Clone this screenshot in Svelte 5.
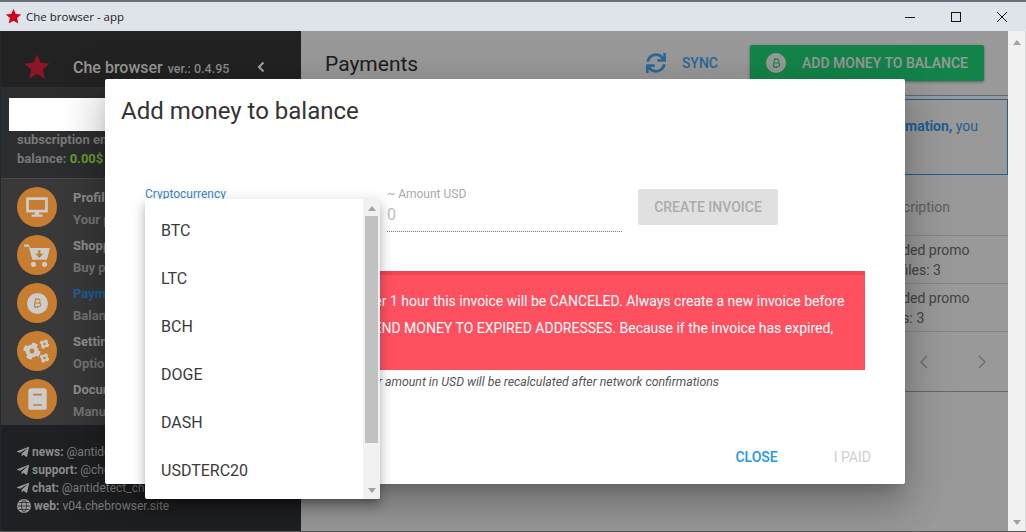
<script>
  const starPoints = '12,1 15.1,8.3 23,9 17,14.2 18.8,22 12,17.9 5.2,22 7,14.2 1,9 8.9,8.3';
  const plane = 'M446.7 98.6l-67.6 318.8c-5.1 22.5-18.4 28.1-37.3 17.5l-103-75.9-49.7 47.8c-5.5 5.5-10.1 10.1-20.7 10.1l7.4-104.9 190.9-172.5c8.3-7.4-1.8-11.5-12.9-4.1L117.8 284 16.2 252.2c-22.1-6.9-22.5-22.1 4.6-32.7L418.2 66.4c18.4-6.9 34.5 4.1 28.5 32.2z';
  const sync = 'M440.65 12.57l4 82.77A247.16 247.16 0 0 0 255.83 8C134.73 8 33.91 94.92 12.29 209.82A12 12 0 0 0 24.09 224h49.05a12 12 0 0 0 11.67-9.26 175.91 175.91 0 0 1 317-56.94l-101.46-4.86a12 12 0 0 0-12.57 12v47.41a12 12 0 0 0 12 12H500a12 12 0 0 0 12-12V12a12 12 0 0 0-12-12h-47.37a12 12 0 0 0-11.98 12.57zM255.83 432a175.61 175.61 0 0 1-146-77.8l101.8 4.87a12 12 0 0 0 12.57-12v-47.4a12 12 0 0 0-12-12H12a12 12 0 0 0-12 12V500a12 12 0 0 0 12 12h47.35a12 12 0 0 0 12-12.6l-4.15-82.57A247.17 247.17 0 0 0 255.83 504c121.11 0 221.93-86.92 243.55-201.82a12 12 0 0 0-11.8-14.18h-49.05a12 12 0 0 0-11.67 9.26A175.86 175.86 0 0 1 255.83 432z';

  const menu = [
    { icon: 'monitor', title: 'Profiles', sub: 'Your profiles' },
    { icon: 'cart', title: 'Shopping', sub: 'Buy profiles' },
    { icon: 'coin', title: 'Payments', sub: 'Balance', active: true },
    { icon: 'gears', title: 'Settings', sub: 'Options' },
    { icon: 'book', title: 'Documentation', sub: 'Manual' }
  ];

  const links = [
    { label: 'news:', value: '@antidetect_news' },
    { label: 'support:', value: '@chebrowser' },
    { label: 'chat:', value: '@antidetect_chat' },
    { label: 'web:', value: 'v04.chebrowser.site', web: true }
  ];

  const rows = [
    ['Loaded promo', 'Profiles: 3'],
    ['Loaded promo', 'Days: 3']
  ];

  const coins = ['BTC', 'LTC', 'BCH', 'DOGE', 'DASH', 'USDTERC20'];
</script>

{#snippet bitcoin(color)}
  <svg viewBox="0 0 24 24" width="24" height="24" fill="none" stroke={color} stroke-width="1.6">
    <path d="M9 6.5h5a2.7 2.7 0 0 1 0 5.4H8.6M8.6 11.9h6a2.9 2.9 0 0 1 0 5.8H7.6M9.7 6.5 8 17.7M11 4.5l-.3 2M14 4.5l-.3 2M10 17.7l-.3 2M13 17.7l-.3 2" />
  </svg>
{/snippet}

{#snippet gear(cx, cy, r)}
  <circle {cx} {cy} {r} fill="#ccc" />
  <circle {cx} {cy} r={r * 1.1} fill="none" stroke="#ccc" stroke-width={r * 0.45} stroke-dasharray={r * 0.86} />
  <circle {cx} {cy} r={r * 0.38} fill="#c77d2f" />
{/snippet}

<div class="window">
  <div class="titlebar">
    <svg class="app-star" viewBox="0 0 24 24" width="17" height="17"><polygon points={starPoints} fill="#d0021b" /></svg>
    <span class="app-title">Che browser - app</span>
    <div class="controls">
      <svg viewBox="0 0 46 30" width="46" height="30"><path d="M18 15.5h10" stroke="#111" /></svg>
      <svg viewBox="0 0 46 30" width="46" height="30"><rect x="18.5" y="10.5" width="9" height="9" fill="none" stroke="#111" /></svg>
      <svg viewBox="0 0 46 30" width="46" height="30"><path d="M18 10l10 10M28 10L18 20" stroke="#111" /></svg>
    </div>
  </div>

  <div class="body">
    <aside class="sidebar">
      <div class="brand">
        <svg viewBox="0 0 24 24" width="28" height="28"><polygon points={starPoints} fill="#8c1526" /></svg>
        <span class="brand-name">Che browser</span>
        <span class="brand-ver">ver.: 0.4.95</span>
        <svg class="collapse" viewBox="0 0 12 14" width="12" height="14"><path d="M8.5 2.500 4 7l4.500 4.500" fill="none" stroke="#a0a0a0" stroke-width="2.200" /></svg>
      </div>

      <div class="account">
        <div>subscription ends: 2021-10-12</div>
        <div>balance: <span class="money">0.00$</span></div>
      </div>

      <nav class="menu">
        {#each menu as item}
          <div class="menu-item">
            <span class="circle">
              {#if item.icon === 'monitor'}
                <svg viewBox="0 0 24 24" width="26" height="26" fill="#ccc"><path d="M2 3h20v14H14v2h3v2H7v-2h3v-2H2zM4.500 5.500v9h15v-9z" fill-rule="evenodd" /></svg>
              {:else if item.icon === 'cart'}
                <svg viewBox="0 0 24 24" width="28" height="28" fill="#ccc"><path d="M1 3h4l1 3h17l-2.500 10H8L5 5H1z" /><circle cx="9" cy="20" r="2.200" /><circle cx="18.500" cy="20" r="2.200" /><path d="M13 8v3h-2.500l3.500 3.500 3.500-3.500H15V8z" fill="#c77d2f" /></svg>
              {:else if item.icon === 'coin'}
                <span class="coin-disc">{@render bitcoin('#c77d2f')}</span>
              {:else if item.icon === 'gears'}
                <svg viewBox="0 0 32 32" width="32" height="32">
                  {@render gear(11, 16, 6.500)}
                  {@render gear(23.500, 9, 3.600)}
                  {@render gear(23.500, 23, 3.600)}
                </svg>
              {:else}
                <svg viewBox="0 0 24 24" width="26" height="26"><rect x="4" y="2" width="17" height="20" rx="2.500" fill="#ccc" /><path d="M8.500 8h8M8.500 17.500h8" stroke="#c77d2f" stroke-width="1.500" /></svg>
              {/if}
            </span>
            <div class="menu-text">
              <div class="menu-title" class:active={item.active}>{item.title}</div>
              <div class="menu-sub">{item.sub}</div>
            </div>
          </div>
        {/each}
      </nav>

      <div class="links">
        {#each links as link}
          <div class="link">
            {#if link.web}
              <svg viewBox="0 0 24 24" width="14" height="14" fill="none" stroke="#999" stroke-width="2"><circle cx="12" cy="12" r="11" fill="#999" /><path d="M1 12h22M3 6h18M3 18h18M12 1c-6 6-6 16 0 22M12 1c6 6 6 16 0 22" stroke="#222" stroke-width="1.300" /></svg>
            {:else}
              <svg viewBox="0 0 448 512" width="12" height="14"><path d={plane} fill="#999" /></svg>
            {/if}
            <b>{link.label}</b> <span>{link.value}</span>
          </div>
        {/each}
      </div>
    </aside>

    <main class="main">
      <header class="page-head">
        <h1>Payments</h1>
        <div class="sync">
          <svg viewBox="0 0 512 512" width="20" height="20"><path d={sync} fill="#46b0ff" /></svg>
          <span>SYNC</span>
        </div>
        <div class="add-btn">
          <span class="add-icon">{@render bitcoin('#20dc7b')}</span>
          <span>ADD MONEY TO BALANCE</span>
        </div>
      </header>

      <div class="info">
        <span>To get more <b>information,</b> you</span>
      </div>

      <div class="table">
        <div class="cell head">Description</div>
        {#each rows as row}
          <div class="cell">{row[0]}<br />{row[1]}</div>
        {/each}
        <div class="pager">
          <svg viewBox="0 0 12 16" width="12" height="16"><path d="M9 2 3 8l6 6" fill="none" stroke="#bbb" stroke-width="1.500" /></svg>
          <svg viewBox="0 0 12 16" width="12" height="16"><path d="m3 2 6 6-6 6" fill="none" stroke="#bbb" stroke-width="1.500" /></svg>
        </div>
      </div>

      <div class="scrim"></div>
    </main>

    <div class="page-scroll">
      <span class="arrow up"></span>
      <span class="arrow down"></span>
    </div>
  </div>

  <div class="redacted"></div>

  <section class="dialog">
    <h2>Add money to balance</h2>

    <div class="form">
      <div class="field coin-field">
        <label for="coin">Cryptocurrency</label>
      </div>
      <div class="field amount-field">
        <label for="amount">~ Amount USD</label>
        <div id="amount" class="amount">0</div>
      </div>
      <div class="create">CREATE INVOICE</div>
    </div>

    <div class="alert">
      Please, read this very carefully! After 1 hour this invoice will be CANCELED. Always create a new invoice before<br />
      making a new payment. DO NOT SEND MONEY TO EXPIRED ADDRESSES. Because if the invoice has expired,<br />
      your money can be lost.
    </div>
    <p class="note">Your amount in USD will be recalculated after network confirmations</p>

    <div class="actions">
      <span class="close">CLOSE</span>
      <span class="paid">I PAID</span>
    </div>

    <div class="dropdown">
      <ul>
        {#each coins as coin}
          <li>{coin}</li>
        {/each}
      </ul>
      <div class="list-scroll">
        <span class="arrow up"></span>
        <div class="thumb"></div>
        <span class="arrow down"></span>
      </div>
    </div>
  </section>
</div>

<style>
  :global(body) {
    margin: 0;
    overflow: hidden;
  }

  .window {
    position: relative;
    width: 1026px;
    height: 532px;
    display: flex;
    flex-direction: column;
    overflow: hidden;
    box-sizing: border-box;
    border-bottom: 1px solid #555;
    font-family: Roboto, "Liberation Sans", sans-serif;
  }

  .titlebar {
    height: 29px;
    flex: none;
    display: flex;
    align-items: center;
    padding-left: 5px;
    background: #dfe3ea;
    border-top: 2px solid #68717c;
  }
  .app-title {
    margin-left: 4px;
    font: 11.5px "Open Sans", sans-serif;
    color: #222;
  }
  .controls {
    margin-left: auto;
    margin-right: 1px;
    display: flex;
  }

  .body {
    flex: 1;
    min-height: 0;
    display: flex;
  }

  .sidebar {
    width: 301px;
    flex: none;
    display: flex;
    flex-direction: column;
    background: #1f2023;
    color: #808080;
    font-size: 13px;
    font-weight: 700;
    border-left: 1px solid #1c2a38;
    box-sizing: border-box;
  }
  .brand {
    height: 56px;
    flex: none;
    box-sizing: border-box;
    display: flex;
    align-items: center;
    padding: 16px 0 0 22px;
    background: #222;
  }
  .brand-name {
    margin-left: 22px;
    font-size: 16px;
    font-weight: 500;
    color: #979797;
  }
  .brand-ver {
    margin-left: 5px;
    font-size: 12.500px;
    font-weight: 500;
    color: #8c8c8c;
    padding-top: 2px;
  }
  .collapse {
    margin-left: 26px;
  }
  .account {
    height: 92px;
    flex: none;
    box-sizing: border-box;
    padding: 43px 16px 0;
    background: #2c2d2f;
    border-bottom: 1px solid #4a4a4a;
    line-height: 19px;
    color: #787878;
  }
  .money {
    color: #6b9a2c;
  }
  .menu {
    height: 246px;
    flex: none;
    box-sizing: border-box;
    padding: 8px 16px 0;
    background: #393939;
  }
  .menu-item {
    height: 48px;
    display: flex;
    gap: 16px;
  }
  .circle {
    width: 40px;
    height: 40px;
    border-radius: 50%;
    flex: none;
    display: flex;
    align-items: center;
    justify-content: center;
    background: #c77d2f;
  }
  .coin-disc {
    width: 21px;
    height: 21px;
    border-radius: 50%;
    display: flex;
    align-items: center;
    justify-content: center;
    background: #ccc;
  }
  .coin-disc :global(svg) {
    width: 16px;
    height: 16px;
  }
  .menu-text {
    line-height: 22px;
  }
  .menu-title {
    color: #8f8f8f;
  }
  .menu-title.active {
    color: #1c5f96;
  }
  .menu-sub {
    color: #757575;
  }
  .links {
    padding: 18px 16px 0;
    line-height: 18px;
    font-size: 12px;
    font-weight: 400;
  }
  .link {
    display: flex;
    align-items: center;
    gap: 3px;
    white-space: nowrap;
  }
  .link b {
    font-weight: 700;
    color: #8c8c8c;
  }

  .main {
    position: relative;
    flex: 1;
    min-width: 0;
    display: flex;
    flex-direction: column;
    background: #fff;
    overflow: hidden;
  }
  .scrim {
    position: absolute;
    inset: 0;
    background: rgba(0, 0, 0, 0.4);
  }
  .page-head {
    height: 65px;
    flex: none;
    box-sizing: border-box;
    display: flex;
    align-items: center;
    padding: 0 24px;
    border-bottom: 1px solid #aaa;
  }
  .page-head h1 {
    margin: 0 auto 0 0;
    padding-top: 2px;
    font-size: 21px;
    font-weight: 400;
    color: #333;
  }
  .sync {
    display: flex;
    align-items: center;
    gap: 16px;
    font-size: 14px;
    font-weight: 500;
    color: #46b0ff;
    margin-right: 32px;
  }
  .add-btn {
    width: 234px;
    height: 36px;
    box-sizing: border-box;
    display: flex;
    align-items: center;
    gap: 16px;
    padding-left: 16px;
    border-radius: 2px;
    background: #20dc7b;
    font-size: 14px;
    font-weight: 500;
    color: #fff;
    white-space: nowrap;
    box-shadow: 0 1px 3px rgba(0, 0, 0, 0.4);
  }
  .add-icon {
    width: 20px;
    height: 20px;
    border-radius: 50%;
    display: flex;
    align-items: center;
    justify-content: center;
    background: #fff;
  }
  .add-icon :global(svg) {
    width: 16px;
    height: 16px;
  }
  .info {
    height: 76px;
    flex: none;
    margin-top: 3px;
    box-sizing: border-box;
    display: flex;
    justify-content: flex-end;
    padding: 16px 29px 0 0;
    border: 1px solid #3aa0ee;
    color: #3aa0ee;
    font-size: 14px;
    line-height: 20px;
  }
  .info b {
    font-weight: 700;
  }
  .table {
    flex: none;
    display: flex;
    flex-direction: column;
    font-size: 14px;
    color: #707070;
  }
  .cell {
    height: 48px;
    padding: 4px 0 0 578px;
    box-sizing: border-box;
    border-bottom: 1px solid #e0e0e0;
    line-height: 20px;
    white-space: nowrap;
  }
  .cell.head {
    height: 61px;
    padding-top: 22px;
    color: #9e9e9e;
  }
  .pager {
    height: 60px;
    display: flex;
    align-items: center;
    justify-content: flex-end;
    gap: 46px;
    padding-right: 20px;
    border-bottom: 1px solid #aaa;
    box-sizing: border-box;
  }

  .page-scroll {
    width: 18px;
    flex: none;
    box-sizing: border-box;
    border-right: 1px solid #d8d8d8;
    background: #f1f1f1;
    display: flex;
    flex-direction: column;
    justify-content: space-between;
    align-items: center;
    padding: 9px 0 6px;
  }
  .arrow {
    width: 0;
    height: 0;
    border-left: 4px solid transparent;
    border-right: 4px solid transparent;
  }
  .arrow.up {
    border-bottom: 5px solid #a3a3a3;
  }
  .arrow.down {
    border-top: 5px solid #a3a3a3;
  }

  .redacted {
    position: absolute;
    left: 9px;
    top: 98px;
    width: 110px;
    height: 33px;
    background: #fff;
  }

  .dialog {
    position: absolute;
    left: 105px;
    top: 79px;
    width: 800px;
    height: 405px;
    box-sizing: border-box;
    display: flex;
    flex-direction: column;
    padding: 16px 0 0 40px;
    border-radius: 2px;
    background: #fff;
    color: #333;
    box-shadow: 0 11px 15px -7px rgba(0, 0, 0, 0.2), 0 24px 38px 3px rgba(0, 0, 0, 0.14), 0 9px 46px 8px rgba(0, 0, 0, 0.12);
  }
  .dialog h2 {
    margin: 0 0 0 -24px;
    font-size: 24px;
    font-weight: 400;
    line-height: 32px;
    color: #333;
  }
  .form {
    margin-top: 59px;
    height: 82px;
    flex: none;
    display: flex;
    align-items: flex-start;
  }
  .field label {
    display: block;
    font-size: 12px;
    line-height: 14px;
  }
  .coin-field {
    width: 242px;
    padding-top: 1px;
  }
  .coin-field label {
    color: #3a85c8;
  }
  .amount-field {
    width: 235px;
    padding-top: 1px;
  }
  .amount-field label {
    color: #aaa;
  }
  .amount {
    height: 20px;
    padding: 4px 0 6px;
    font-size: 16px;
    line-height: 20px;
    color: #c0c0c0;
    border-bottom: 1px dotted #777;
  }
  .create {
    width: 140px;
    height: 36px;
    margin: 3px 0 0 16px;
    border-radius: 2px;
    background: #e0e0e0;
    color: #ababab;
    font-size: 14px;
    font-weight: 500;
    line-height: 36px;
    text-align: center;
  }
  .alert {
    width: 720px;
    height: 99px;
    flex: none;
    margin-top: 3px;
    box-sizing: border-box;
    padding: 13px 0 0 16px;
    background: #ff5060;
    border-top: 4px solid #ee4453;
    color: #fff;
    font-size: 14px;
    line-height: 27px;
    white-space: nowrap;
  }
  .note {
    width: 574px;
    margin: 5px 0 0;
    font-size: 12.300px;
    font-style: italic;
    line-height: 14px;
    text-align: right;
    white-space: nowrap;
    color: #555;
  }
  .actions {
    margin-top: auto;
    height: 54px;
    display: flex;
    justify-content: flex-end;
    gap: 56px;
    padding-right: 34px;
    font-size: 14px;
    font-weight: 500;
    line-height: 54px;
  }
  .close {
    color: #2196f3;
  }
  .paid {
    color: #cfcfcf;
    font-weight: 400;
  }

  .dropdown {
    position: absolute;
    left: 40px;
    top: 120px;
    width: 235px;
    height: 300px;
    display: flex;
    overflow: hidden;
    border-radius: 2px;
    background: #fff;
    box-shadow: 0 5px 5px -3px rgba(0, 0, 0, 0.2), 0 8px 10px 1px rgba(0, 0, 0, 0.14), 0 3px 14px 2px rgba(0, 0, 0, 0.12);
  }
  .dropdown ul {
    flex: 1;
    margin: 0;
    padding: 8px 0 0;
    list-style: none;
  }
  .dropdown li {
    height: 48px;
    padding-left: 16px;
    font-size: 16px;
    line-height: 48px;
    color: #3a3a3a;
  }
  .list-scroll {
    width: 17px;
    flex: none;
    display: flex;
    flex-direction: column;
    align-items: center;
    justify-content: space-between;
    padding: 7px 0 6px;
    box-sizing: border-box;
    background: #f1f1f1;
  }
  .thumb {
    width: 13px;
    height: 227px;
    margin: 5px 0 auto;
    background: #c1c1c1;
  }
</style>
